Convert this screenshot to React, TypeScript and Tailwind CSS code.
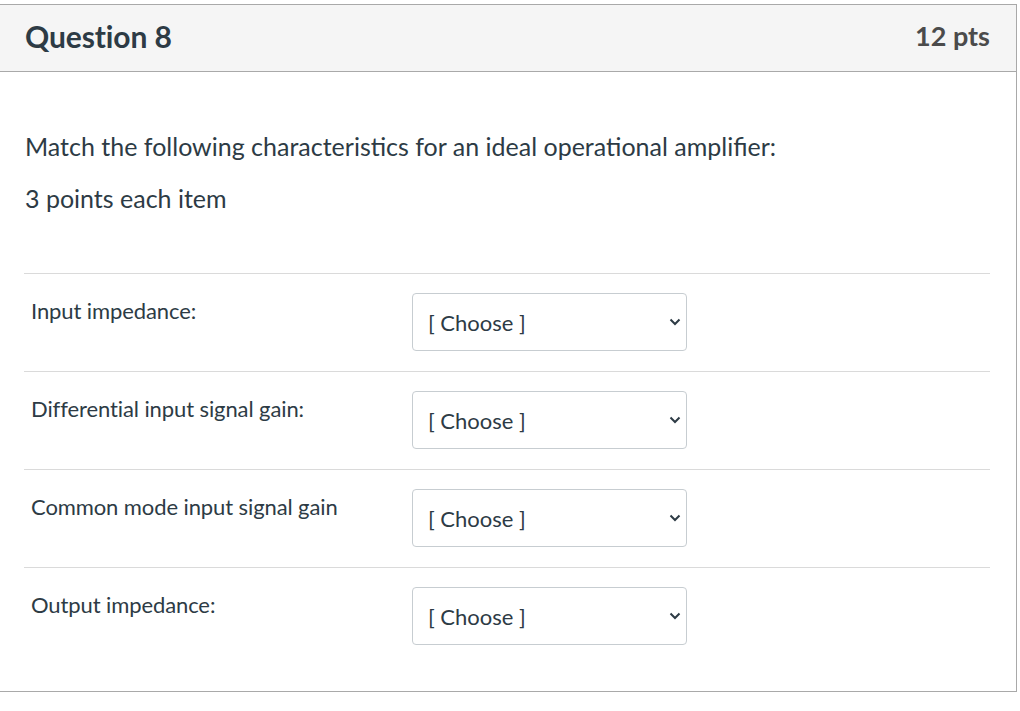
import * as React from "react"

const rows = [
  "Input impedance:",
  "Differential input signal gain:",
  "Common mode input signal gain",
  "Output impedance:",
]

function ChooseBox() {
  return (
    <div className="w-[275px] h-[58px] shrink-0 flex items-center justify-between pl-[15px] pr-[5px] bg-white border border-[#c7cdd1] rounded-[4px]">
      <span className="text-[22px] text-[#2d3b45]">[ Choose ]</span>
      <svg width="12" height="8" viewBox="0 0 12 8">
        <path d="M1.5 1.5 L6 6 L10.5 1.5" fill="none" stroke="#2d3b45" strokeWidth="2" />
      </svg>
    </div>
  )
}

export default function App() {
  return (
    <div className="w-[1020px] h-[711px] bg-white pt-[4px] text-[#2d3b45]" style={{ fontFamily: "Lato, 'Liberation Sans', sans-serif" }}>
      <div className="w-[1017px] h-[688px] border-t border-r border-b border-[#a9a9a9] flex flex-col">

        {/* Header */}
        <div className="h-[67px] shrink-0 flex items-center justify-between pl-[25px] pr-[26px] pb-[3px] bg-[#f5f5f5] border-b border-[#a9a9a9]">
          <h2 className="text-[30px] font-bold tracking-[-0.1px]">Question 8</h2>
          <span className="text-[27px] font-bold text-[#4b4b4b]">12 pts</span>
        </div>

        {/* Body */}
        <div className="pl-[24px] pr-[26px] pt-[58px]">
          <p className="pl-[1px] text-[25px] leading-[32px]">Match the following characteristics for an ideal operational amplifier:</p>
          <p className="pl-[1px] mt-[20px] text-[25px] leading-[32px]">3 points each item</p>

          <div className="mt-[59px]">
            {rows.map((r) => (
              <div key={r} className="h-[98px] border-t border-[#dadada] flex items-start pt-[19px]">
                <div className="w-[388px] pl-[7px] pt-[5px] text-[22px] leading-[26px] tracking-[-0.1px]">{r}</div>
                <ChooseBox />
              </div>
            ))}
          </div>
        </div>
      </div>
    </div>
  )
}
